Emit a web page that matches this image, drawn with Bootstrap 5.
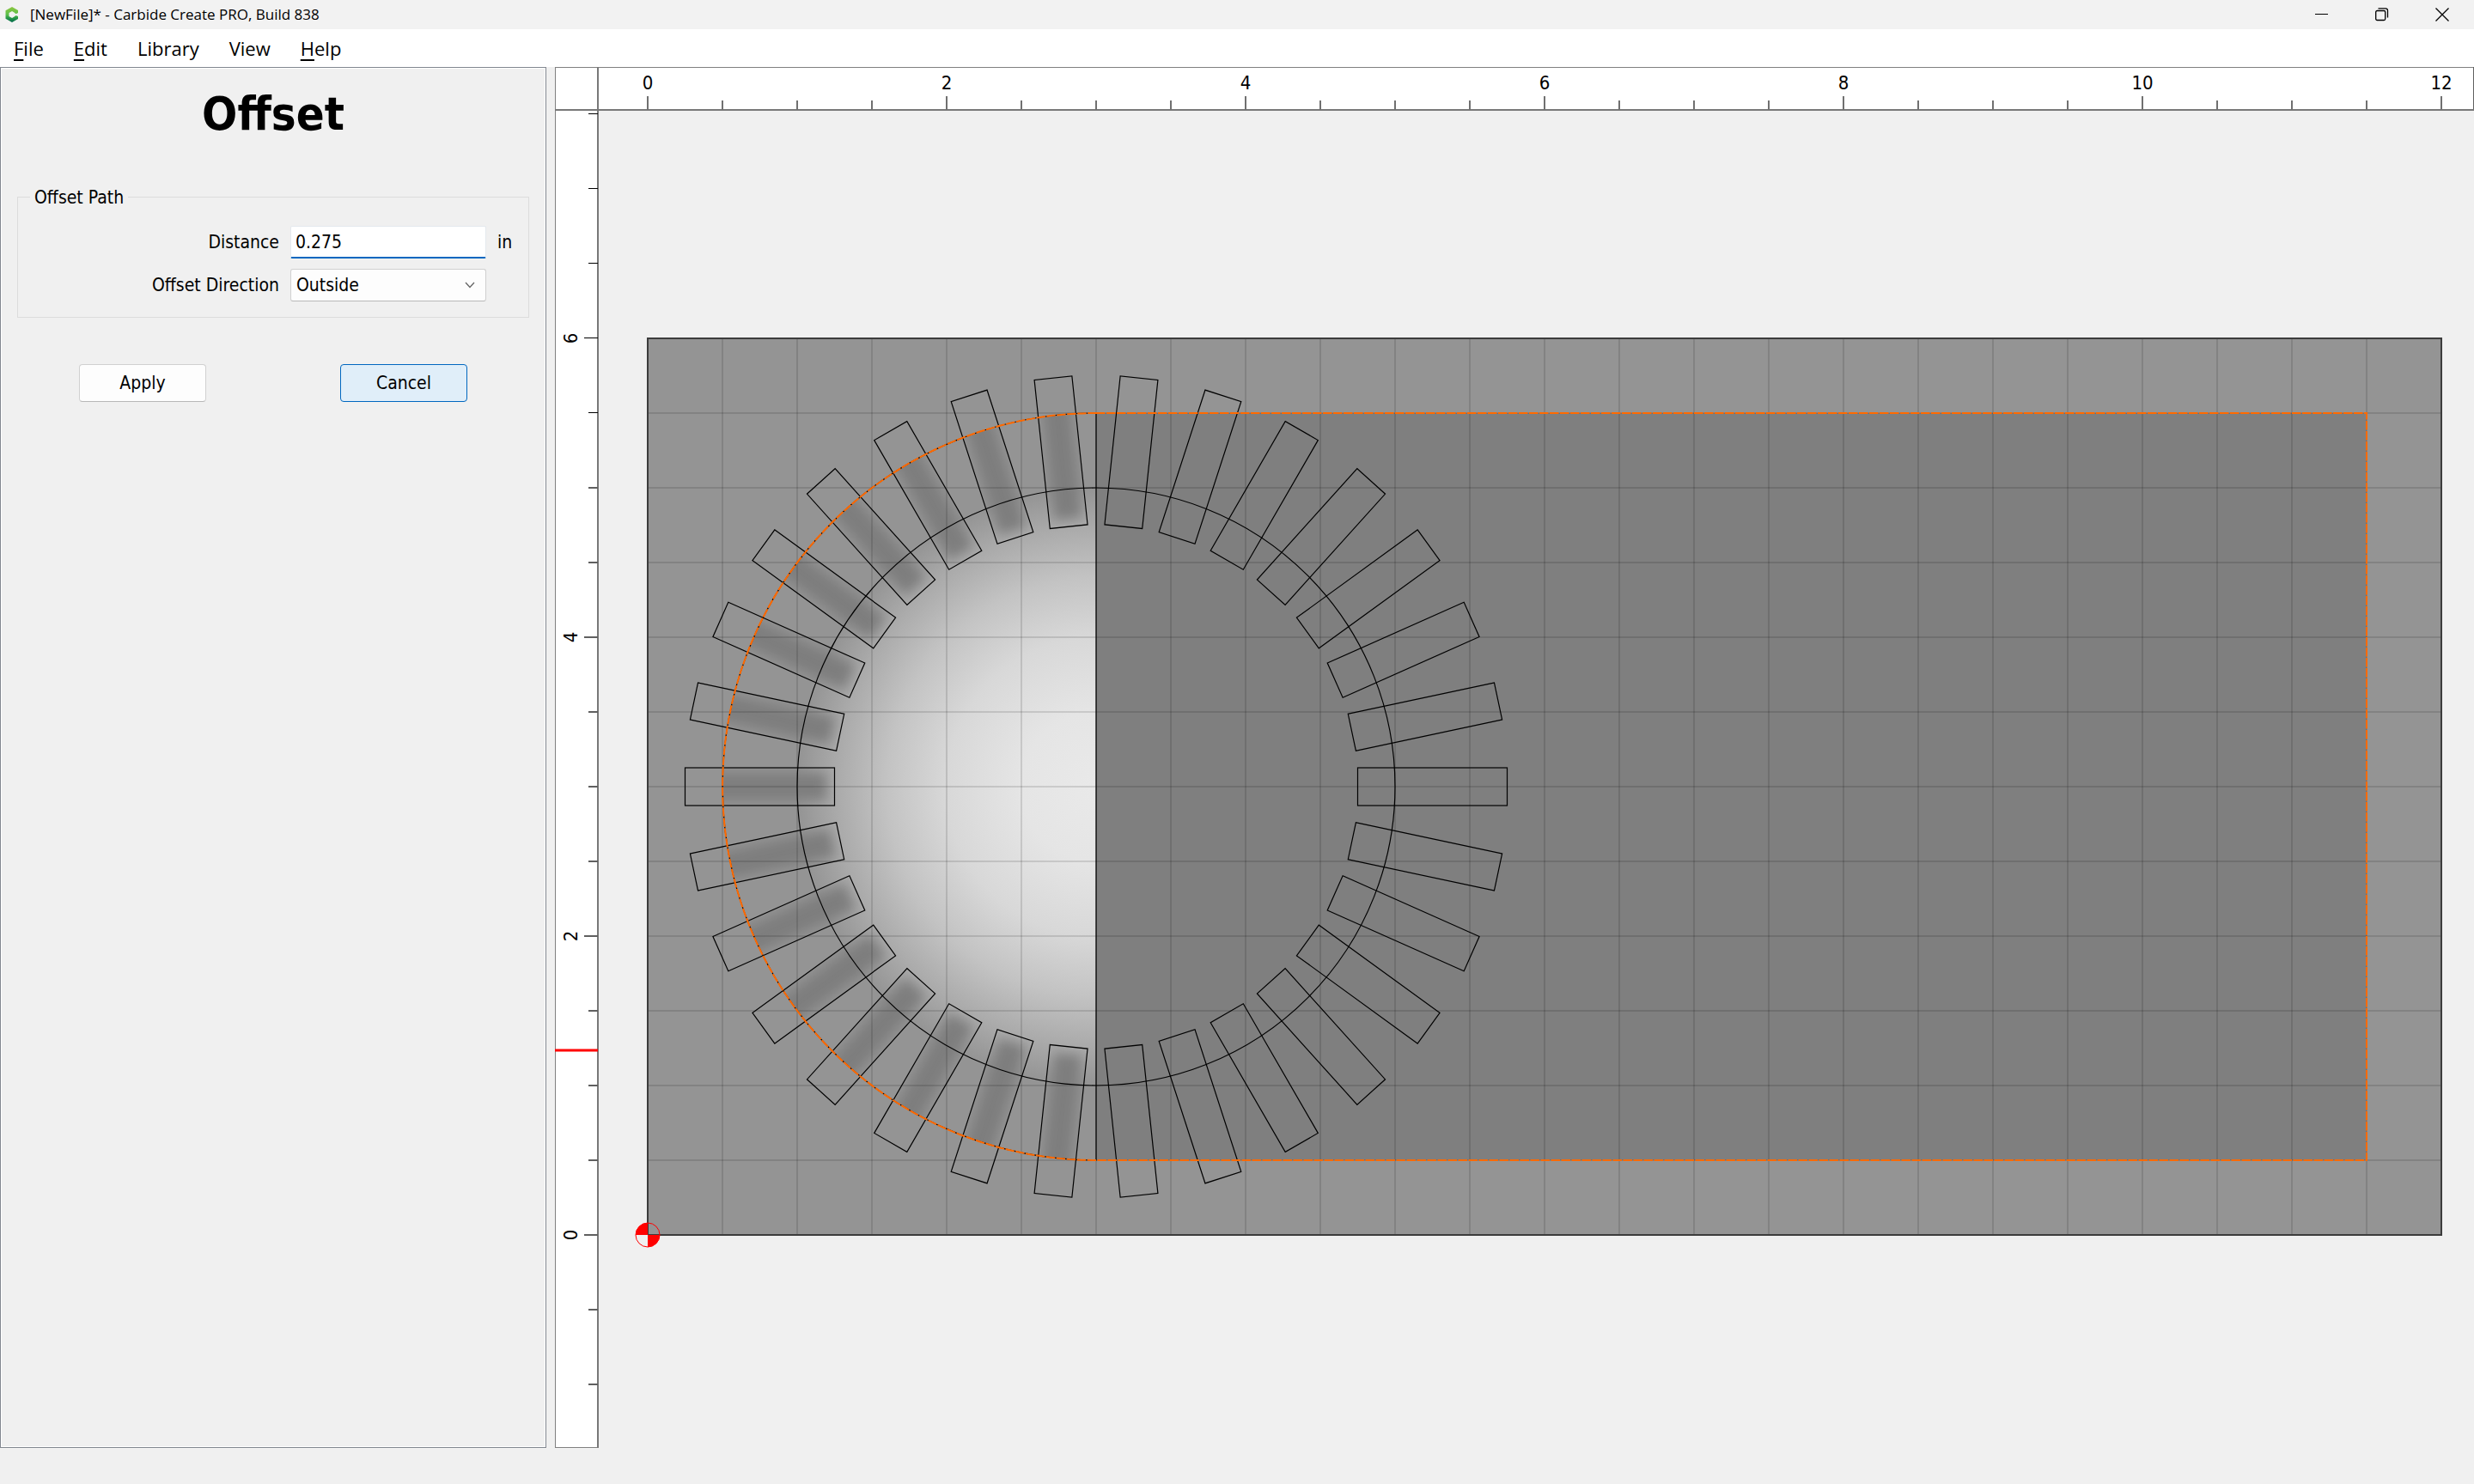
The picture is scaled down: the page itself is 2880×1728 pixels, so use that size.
<!DOCTYPE html>
<html lang="en">
<head>
<meta charset="utf-8">
<meta name="viewport" content="width=device-width, initial-scale=1">
<title>[NewFile]* - Carbide Create PRO, Build 838</title>
<link href="https://cdn.jsdelivr.net/npm/bootstrap@5.3.0/dist/css/bootstrap.min.css" rel="stylesheet">
<style>
body { background: #f0f0f0; color: #000; font-family: "DejaVu Sans Condensed", "Noto Sans", sans-serif; font-size: 21px; line-height: 28px; }
.titlebar { background: #f2f2f2; height: 34px; padding: 0 2px 0 5px; font-family: "Open Sans", "Noto Sans", sans-serif; font-size: 17px; }
.winbtn { border: 0; background: none; width: 70px; height: 34px; padding: 0; }
.winbtn svg { display: block; margin: 0 auto; }
.menubar { background: #fff; height: 44px; padding-left: 16px; gap: 35px; font-family: "Open Sans", "Noto Sans", sans-serif; font-size: 22px; }
.menubar .nav-link { color: #000; padding: 0; line-height: 44px; }
.menubar u { text-underline-offset: 4px; text-decoration-thickness: 2px; }
.sidepanel { width: 636px; flex: none; margin-right: 10px; border: 1px solid #828790; box-shadow: inset 0 0 0 1px #fff; padding: 24px 19px 0; }
.tooltitle { font-size: 54px; font-weight: 700; line-height: 60px; margin-bottom: 66px; }
.groupbox { border: 1px solid #dcdcdc; padding: 33px 18px 18px 48px; position: relative; }
.grouplabel { position: absolute; left: 14px; top: -14px; background: #f0f0f0; padding: 0 5px; font-size: 21px; line-height: 28px; margin: 0; width: auto; }
.fieldrow { display: grid; grid-template-columns: 1fr 228px 18px; column-gap: 13px; align-items: center; }
.fieldrow label { text-align: right; }
.form-control.distance { height: 38px; border: 1px solid #e4e9ee; border-bottom: 2px solid #0067c0; border-radius: 2px; padding: 0 5px; font-size: 21px; color: #000; box-shadow: none; }
.form-select.direction { height: 38px; border: 1px solid #d0d0d0; border-bottom-color: #b8b8b8; border-radius: 3px; padding: 0 6px; font-size: 21px; line-height: 28px; color: #000; background-color: #fdfdfd;
  background-image: url("data:image/svg+xml,%3csvg xmlns='http://www.w3.org/2000/svg' viewBox='0 0 12 8'%3e%3cpath fill='none' stroke='%23666' stroke-width='1.3' d='M1 1l5 5.5L11 1'/%3e%3c/svg%3e"); background-size: 12px 8px; background-position: right 12px center; }
.panelbtns { margin-top: 54px; }
.toolbtn { width: 148px; height: 44px; padding: 0; font-size: 21px; line-height: 28px; border-radius: 4px; color: #000; background: #fdfdfd; border: 1px solid #d0d0d0; border-bottom-color: #b8b8b8; }
.toolbtn.hot { background: #e0eef9; border-color: #0067c0; }
.workspace text { font-family: "DejaVu Sans Condensed", "Noto Sans", sans-serif; font-size: 22px; text-anchor: middle; }
.statusline { height: 42px; }
</style>
</head>
<body class="d-flex flex-column vh-100 overflow-hidden">

<header class="titlebar d-flex align-items-center">
  <svg width="18" height="20" viewBox="0 0 18 20" aria-hidden="true">
    <defs><linearGradient id="logo" x1="0" y1="0" x2="0" y2="1"><stop offset="0" stop-color="#8cc63f"/><stop offset=".5" stop-color="#5cbf4a"/><stop offset=".68" stop-color="#2f9e48"/><stop offset="1" stop-color="#00694b"/></linearGradient></defs>
    <path fill="url(#logo)" d="M9 1l7 4v3l-2.500 1.300L11.500 7.500 9 6 5.500 8v4L9 14l2.500-1.500 2-1.500L16 12v3l-7 4-7.500-4.300V5.300z"/>
  </svg>
  <span class="flex-grow-1 ms-2 ps-1">[NewFile]* - Carbide Create PRO, Build 838</span>
  <button class="winbtn" type="button" aria-label="Minimize"><svg width="16" height="16" viewBox="0 0 16 16"><path d="M0 7.500h15" stroke="#000"/></svg></button>
  <button class="winbtn" type="button" aria-label="Restore"><svg width="16" height="16" viewBox="0 0 16 16" fill="none" stroke="#000" stroke-width="1.300"><rect x=".7" y="3.500" width="11" height="11" rx="1.500"/><path d="M3.500 .8H12a2.500 2.500 0 0 1 2.500 2.500V11.500"/></svg></button>
  <button class="winbtn" type="button" aria-label="Close"><svg width="16" height="16" viewBox="0 0 16 16"><path d="M.5 .5l15 15M15.500 .5l-15 15" stroke="#000" stroke-width="1.300"/></svg></button>
</header>

<nav class="menubar nav">
  <a class="nav-link" href="#"><u>F</u>ile</a>
  <a class="nav-link" href="#"><u>E</u>dit</a>
  <a class="nav-link" href="#">Library</a>
  <a class="nav-link" href="#">View</a>
  <a class="nav-link" href="#"><u>H</u>elp</a>
</nav>

<main class="d-flex flex-grow-1">
  <aside class="sidepanel">
    <h1 class="tooltitle text-center">Offset</h1>
    <form>
      <fieldset class="groupbox">
        <legend class="grouplabel">Offset Path</legend>
        <div class="fieldrow mb-2 pb-1">
          <label for="distance">Distance</label>
          <input class="form-control distance" id="distance" type="text" value="0.275">
          <span>in</span>
        </div>
        <div class="fieldrow">
          <label for="direction">Offset Direction</label>
          <select class="form-select direction" id="direction"><option>Outside</option><option>Inside</option></select>
        </div>
      </fieldset>
      <div class="row g-0 panelbtns">
        <div class="col text-center pe-2"><button class="btn toolbtn" type="button">Apply</button></div>
        <div class="col text-center ps-1"><button class="btn toolbtn hot" type="button">Cancel</button></div>
      </div>
    </form>
  </aside>
  <section class="flex-grow-1 d-flex">
    <svg class="workspace w-100 h-100" id="workspace" role="img" aria-label="Design canvas"></svg>
  </section>
</main>
<footer class="statusline"></footer>

<script>
(function () {
  const svg = document.getElementById('workspace');
  const W = svg.clientWidth, H = svg.clientHeight;
  const S = 174, ox = 108, oy = 1360;               // pixels per inch, origin
  const X = v => ox + v * S, Y = v => oy - v * S;
  const cx = X(3), cy = Y(3), rule = 50;
  const line = (x1, y1, x2, y2, c, w) => `<path d="M${x1} ${y1}L${x2} ${y2}" stroke="${c}" stroke-width="${w}" fill="none"/>`;
  let o = `<defs>
    <radialGradient id="dome" gradientUnits="userSpaceOnUse" cx="${cx}" cy="${cy}" r="${2 * S}">
      <stop offset="0" stop-color="#e9e9e9"/><stop offset=".25" stop-color="#e5e5e5"/><stop offset=".5" stop-color="#d8d8d8"/>
      <stop offset=".7" stop-color="#c3c3c3"/><stop offset=".87" stop-color="#aaaaaa"/><stop offset="1" stop-color="#949494"/>
    </radialGradient>
    <filter id="soft" filterUnits="userSpaceOnUse" x="200" y="-60" width="400" height="120"><feGaussianBlur stdDeviation="7"/></filter>
    <clipPath id="half"><path d="M${cx} ${Y(5.5)}A${2.5 * S} ${2.5 * S} 0 0 0 ${cx} ${Y(.5)}z"/></clipPath>
    <clipPath id="slotclip"><rect x="${1.75 * S}" y="-22" width="${S}" height="44"/></clipPath>
  </defs>`;

  // stock with the height preview
  o += `<rect x="${ox}" y="${Y(6)}" width="${12 * S}" height="${6 * S}" fill="#949494"/>`;
  o += `<path d="M${cx} ${Y(5)}A${2 * S} ${2 * S} 0 0 0 ${cx} ${Y(1)}z" fill="url(#dome)"/>`;
  o += `<g clip-path="url(#half)">`;
  for (let a = 96; a <= 264; a += 12)
    o += `<g transform="translate(${cx} ${cy}) rotate(${a})" clip-path="url(#slotclip)"><rect x="314" y="-16" width="200" height="32" fill="#7e7e7e" filter="url(#soft)"/></g>`;
  o += `</g>`;
  o += `<rect x="${cx}" y="${Y(5.5)}" width="${8.5 * S}" height="${5 * S}" fill="#7f7f7f"/>`;

  // half-inch grid
  for (let v = .5; v < 12; v += .5) o += line(X(v), Y(6), X(v), oy, 'rgba(0,0,0,.12)', 2);
  for (let v = .5; v < 6; v += .5) o += line(ox, Y(v), X(12), Y(v), 'rgba(0,0,0,.12)', 2);
  o += `<rect x="${ox}" y="${Y(6)}" width="${12 * S}" height="${6 * S}" fill="none" stroke="#3c3c3c" stroke-width="2"/>`;

  // vectors
  o += `<g fill="none" stroke="#000" stroke-width="1.200"><circle cx="${cx}" cy="${cy}" r="${2 * S}"/>`;
  for (let a = 0; a < 360; a += 12)
    o += `<rect x="${1.75 * S}" y="-22" width="${S}" height="44" transform="translate(${cx} ${cy}) rotate(${a})"/>`;
  o += `<path d="M${cx} ${Y(5.5)}V${Y(.5)}A${2.5 * S} ${2.5 * S} 0 0 1 ${cx} ${Y(5.5)}"/></g>`;
  o += `<path d="M${cx} ${Y(5.5)}H${X(11.5)}V${Y(.5)}H${cx}A${2.5 * S} ${2.5 * S} 0 0 1 ${cx} ${Y(5.5)}" fill="none" stroke="#ff6a00" stroke-width="2" stroke-dasharray="10.500 1.500"/>`;

  // origin marker
  o += `<g transform="translate(${ox} ${oy})"><path d="M0 0V-14A14 14 0 0 0 -14 0zM0 0V14A14 14 0 0 0 14 0z" fill="red"/><path d="M0 0H-14A14 14 0 0 0 0 14z" fill="#f0f0f0"/><circle r="14" fill="none" stroke="red"/></g>`;

  // rulers
  o += `<rect width="${W}" height="${rule}" fill="#fff"/><rect width="${rule}" height="${H}" fill="#fff"/>`;
  o += `<g>` + line(0, .5, W, .5, '#808080', 1) + line(.5, 0, .5, H, '#808080', 1) + line(0, H - .5, rule, H - .5, '#808080', 1)
     + line(W - .5, 0, W - .5, rule, '#606060', 1) + line(0, rule, W, rule, '#787878', 2) + line(rule, 0, rule, H, '#787878', 2) + `</g>`;
  for (let v = 0; v <= 12; v += .5) {
    const big = v % 2 === 0;
    o += line(X(v), rule - (big ? 16 : 11), X(v), rule, '#707070', 2);
    if (big) o += `<text x="${X(v)}" y="26">${v}</text>`;
  }
  for (let v = -1; v <= 7.5; v += .5) {
    const big = v % 2 === 0, thin = v > 5;
    const y = thin ? Y(v) - .5 : Y(v);
    o += line(rule - (big ? 16 : 11), y, rule, y, thin ? '#000' : '#606060', thin ? 1 : 2);
    if (big) o += `<text transform="translate(26 ${Y(v)}) rotate(-90)">${v}</text>`;
  }
  o += line(0, 1145, rule, 1145, 'red', 3);
  svg.innerHTML = o;
})();
</script>
<script src="https://cdn.jsdelivr.net/npm/bootstrap@5.3.0/dist/js/bootstrap.bundle.min.js"></script>
</body>
</html>
